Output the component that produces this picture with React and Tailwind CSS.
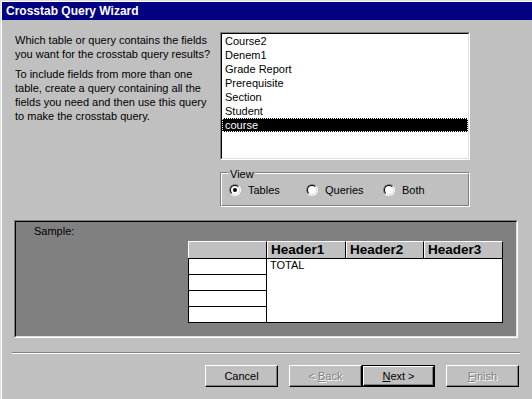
import React from "react";

const tables = ["Course2", "Denem1", "Grade Report", "Prerequisite", "Section", "Student", "course"];

const Radio = ({ label, checked }) => (
    <div className="w-[77px] flex items-center gap-[7px]">
        <span className="w-[12px] h-[12px] rounded-full border border-t-[#808080] border-l-[#808080] border-r-white border-b-white">
            <span className="w-full h-full rounded-full border border-t-black border-l-black border-r-[#dfdfdf] border-b-[#dfdfdf] bg-white flex items-center justify-center">
                {checked && <span className="w-[4px] h-[4px] rounded-full bg-black" />}
            </span>
        </span>
        <span>{label}</span>
    </div>
);

const Button = ({ children, disabled, isDefault }) => (
    <div className={isDefault ? "w-[73px] h-[22px] border border-black" : "w-[73px] h-[22px]"}>
        <div
            className={
                disabled
                    ? "h-full flex items-center justify-center border border-t-white border-l-white border-r-black border-b-black shadow-[inset_-1px_-1px_0_#808080] text-[#808080] [text-shadow:1px_1px_0_#fff]"
                    : "h-full flex items-center justify-center border border-t-white border-l-white border-r-black border-b-black shadow-[inset_-1px_-1px_0_#808080]"
            }
        >
            <span className="whitespace-pre">{children}</span>
        </div>
    </div>
);

export default function App() {
    return (
        <div className="w-[532px] h-[399px] overflow-hidden bg-[#c0c0c0] border-t border-l border-[#dfdfdf] text-black text-[11px] leading-[14px] font-['Liberation_Sans',Arial,sans-serif]">
            <div className="h-full border-t border-l border-white flex flex-col">
                {/* title bar */}
                <div className="h-[18px] shrink-0 bg-[#000080] text-white font-bold text-[12px] pl-[4px] flex items-center">
                    Crosstab Query Wizard
                </div>

                {/* top: description + table list */}
                <div className="flex mt-[12px]">
                    <div className="ml-[13px] w-[205px] mt-[1px] whitespace-nowrap">
                        <p className="mb-[6px]">
                            Which table or query contains the fields<br />
                            you want for the crosstab query results?
                        </p>
                        <p>
                            To include fields from more than one<br />
                            table, create a query containing all the<br />
                            fields you need and then use this query<br />
                            to make the crosstab query.
                        </p>
                    </div>

                    <div className="flex flex-col">
                        <div className="w-[250px] h-[128px] border border-t-[#808080] border-l-[#808080] border-r-white border-b-white">
                            <div className="h-full bg-white border border-t-black border-l-black border-r-[#dfdfdf] border-b-[#dfdfdf]">
                                {tables.map((t, i) =>
                                    i === tables.length - 1 ? (
                                        <div key={i} className="h-[14px] pl-[3px] bg-black text-white outline-1 outline-dotted outline-white -outline-offset-1">
                                            {t}
                                        </div>
                                    ) : (
                                        <div key={i} className="h-[14px] pl-[3px]">{t}</div>
                                    )
                                )}
                            </div>
                        </div>

                        {/* view group */}
                        <div className="relative w-[250px] h-[35px] mt-[12px] border border-t-[#808080] border-l-[#808080] border-r-white border-b-white">
                            <span className="absolute left-[8px] -top-[6px] px-[1px] bg-[#c0c0c0]">View</span>
                            <div className="h-full flex items-center pl-[7px] border border-t-white border-l-white border-r-[#808080] border-b-[#808080]">
                                <Radio label="Tables" checked />
                                <Radio label="Queries" />
                                <Radio label="Both" />
                            </div>
                        </div>
                    </div>
                </div>

                {/* sample */}
                <div className="ml-[12px] mt-[13px] w-[504px] h-[118px] shrink-0 border border-t-[#808080] border-l-[#808080] border-r-white border-b-white">
                    <div className="h-full bg-[#808080] border border-t-black border-l-black border-r-[#dfdfdf] border-b-[#dfdfdf] flex flex-col">
                        <div className="pl-[18px] pt-[2px]">Sample:</div>
                        <div className="ml-[172px] mt-[3px] flex w-[315px]">
                            <div className="w-[79px] flex flex-col">
                                <div className="h-[17px] bg-[#c0c0c0] border-t border-l border-white border-r border-r-black" />
                                <div className="h-[65px] bg-white border border-black flex flex-col">
                                    <div className="h-[16px] border-b border-black" />
                                    <div className="h-[16px] border-b border-black" />
                                    <div className="h-[16px] border-b border-black" />
                                    <div className="h-[15px]" />
                                </div>
                            </div>
                            <div className="flex-1 flex flex-col">
                                <div className="h-[17px] flex font-bold text-[13.5px] leading-[16px]">
                                    <div className="w-[79px] pl-[3px] bg-[#c0c0c0] border-t border-l border-white border-r border-r-black">Header1</div>
                                    <div className="w-[78px] pl-[3px] bg-[#c0c0c0] border-t border-l border-white border-r border-r-black">Header2</div>
                                    <div className="w-[79px] pl-[3px] bg-[#c0c0c0] border-t border-l border-white border-r border-r-black">Header3</div>
                                </div>
                                <div className="h-[65px] bg-white border-t border-r border-b border-black pl-[3px] leading-[13px]">
                                    TOTAL
                                </div>
                            </div>
                        </div>
                    </div>
                </div>

                {/* separator */}
                <div className="ml-[10px] mt-[14px] w-[508px] h-[2px] shrink-0 border-t border-t-[#808080] border-b border-b-white" />

                {/* buttons */}
                <div className="flex ml-[203px] mt-[11px]">
                    <Button>Cancel</Button>
                    <div className="ml-[11px]">
                        <Button disabled>&lt; <u>B</u>ack</Button>
                    </div>
                    <Button isDefault><u>N</u>ext &gt;</Button>
                    <div className="ml-[11px]">
                        <Button disabled><u>F</u>inish</Button>
                    </div>
                </div>
            </div>
        </div>
    );
}
